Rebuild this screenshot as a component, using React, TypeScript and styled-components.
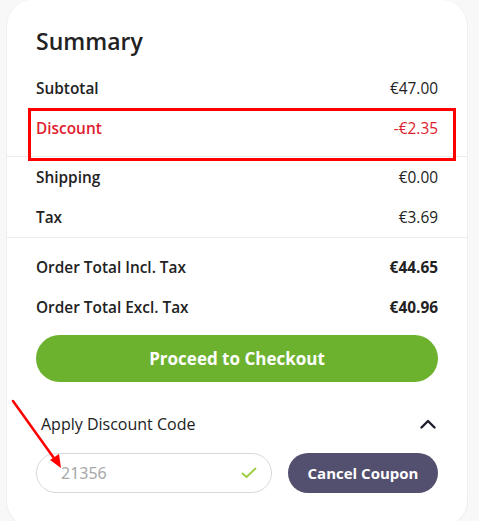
import React from "react";
import styled, { createGlobalStyle } from "styled-components";

const GlobalStyle = createGlobalStyle`
  html, body {
    margin: 0;
    padding: 0;
    background: #f8f8f8;
    overflow: hidden;
  }
  body {
    font-family: "Open Sans", "Noto Sans", sans-serif;
    color: #222222;
  }
  * { box-sizing: border-box; }
`;

const Page = styled.div`
  position: relative;
  width: 479px;
  height: 521px;
  overflow: hidden;
  padding-left: 6px;
`;

const Card = styled.div`
  width: 462px;
  height: 527px;
  background: #ffffff;
  border: 1px solid #efefef;
  border-top: none;
  border-radius: 26px;
  display: flex;
  flex-direction: column;
`;

const Section = styled.div<{ $pt: number; $pb: number; $divider?: boolean }>`
  padding: ${(p) => p.$pt}px 29px ${(p) => p.$pb}px 29px;
  border-bottom: ${(p) => (p.$divider ? "1px solid #ececec" : "none")};
  display: flex;
  flex-direction: column;
`;

const Title = styled.h2`
  margin: 0 0 12px 0;
  height: 30px;
  line-height: 30px;
  font-size: 23px;
  font-weight: 600;
  color: #222222;
`;

const Row = styled.div<{ $tone?: "red" }>`
  height: 40px;
  display: flex;
  align-items: center;
  justify-content: space-between;
  font-size: 15.4px;
  color: ${(p) => (p.$tone === "red" ? "#e0202e" : "#222222")};
`;

const Label = styled.span`
  font-weight: 600;
`;

const Value = styled.span<{ $strong?: boolean }>`
  font-weight: ${(p) => (p.$strong ? 700 : 400)};
`;

const CheckoutButton = styled.button`
  margin-top: 8px;
  height: 47px;
  border: none;
  border-radius: 24px;
  background: #6cb22f;
  color: #ffffff;
  font-family: inherit;
  font-size: 17px;
  font-weight: 700;
  cursor: pointer;
`;

const CouponHeader = styled.div`
  margin-top: 20px;
  height: 44px;
  display: flex;
  align-items: center;
  justify-content: space-between;
  padding: 0 2px 0 5px;
  font-size: 16px;
  font-weight: 500;
  color: #222222;
`;

const CouponRow = styled.div`
  margin-top: 7px;
  display: flex;
  gap: 16px;
  align-items: center;
`;

const InputWrap = styled.div`
  width: 236px;
  height: 40px;
  border: 1px solid #d9d9d9;
  border-radius: 20px;
  display: flex;
  align-items: center;
  padding: 0 14px 0 24px;
`;

const CodeInput = styled.input`
  flex: 1;
  min-width: 0;
  border: none;
  outline: none;
  background: transparent;
  font-family: "Noto Sans", sans-serif;
  font-size: 16px;
  color: #a8a8a8;
  padding: 0;
`;

const CancelButton = styled.button`
  flex: 1;
  height: 40px;
  border: none;
  border-radius: 20px;
  background: #534f6e;
  color: #ffffff;
  font-family: inherit;
  font-size: 15px;
  font-weight: 700;
  cursor: pointer;
`;

const Highlight = styled.div`
  position: absolute;
  left: 28px;
  top: 108px;
  width: 428px;
  height: 53px;
  border: 3px solid #ff0000;
  pointer-events: none;
`;

const ArrowSvg = styled.svg`
  position: absolute;
  left: 0;
  top: 390px;
  pointer-events: none;
`;

export default function App() {
  return (
    <>
      <GlobalStyle />
      <Page>
        <Card>
          <Section $pt={26} $pb={8} $divider>
            <Title>Summary</Title>
            <Row>
              <Label>Subtotal</Label>
              <Value>€47.00</Value>
            </Row>
            <Row $tone="red">
              <Label>Discount</Label>
              <Value>-€2.35</Value>
            </Row>
          </Section>
          <Section $pt={0} $pb={0} $divider>
            <Row>
              <Label>Shipping</Label>
              <Value>€0.00</Value>
            </Row>
            <Row>
              <Label>Tax</Label>
              <Value>€3.69</Value>
            </Row>
          </Section>
          <Section $pt={9} $pb={0}>
            <Row>
              <Label>Order Total Incl. Tax</Label>
              <Value $strong>€44.65</Value>
            </Row>
            <Row>
              <Label>Order Total Excl. Tax</Label>
              <Value $strong>€40.96</Value>
            </Row>
            <CheckoutButton>Proceed to Checkout</CheckoutButton>
            <CouponHeader>
              <span>Apply Discount Code</span>
              <svg width="16" height="10" viewBox="0 0 16 10">
                <path d="M1.5 8.5 L8 2 L14.5 8.5" fill="none" stroke="#1f1f2e" strokeWidth="2.4" strokeLinecap="round" strokeLinejoin="round" />
              </svg>
            </CouponHeader>
            <CouponRow>
              <InputWrap>
                <CodeInput defaultValue="21356" readOnly />
                <svg width="16" height="12" viewBox="0 0 16 12">
                  <path d="M1.5 6.5 L5.5 10 L14.5 1.5" fill="none" stroke="#9ccc3c" strokeWidth="1.8" strokeLinecap="round" strokeLinejoin="round" />
                </svg>
              </InputWrap>
              <CancelButton>Cancel Coupon</CancelButton>
            </CouponRow>
          </Section>
        </Card>
        <Highlight />
        <ArrowSvg width="80" height="90" viewBox="0 0 80 90">
          <line x1="13" y1="11" x2="56" y2="71" stroke="#ff0000" strokeWidth="2.5" strokeLinecap="round" />
          <path d="M61 78 L50 70 L59 64 Z" fill="#ff0000" />
        </ArrowSvg>
      </Page>
    </>
  );
}
